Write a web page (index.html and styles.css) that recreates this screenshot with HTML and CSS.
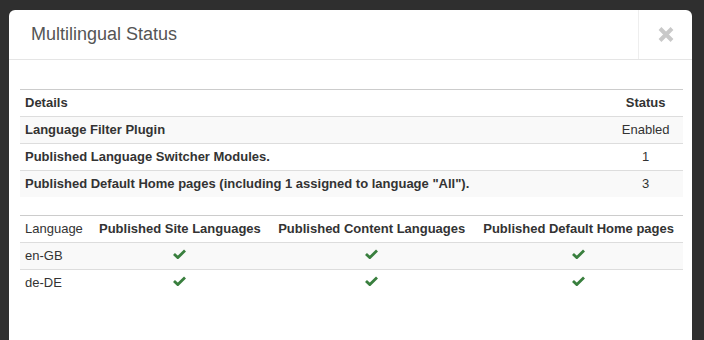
FILE: index.html
```html
<!DOCTYPE html>
<html lang="en">
<head>
  <meta charset="UTF-8" />
  <title>Multilingual Status</title>
  <link rel="stylesheet" href="styles.css">
</head>
<body>
  <div class="modal">
    <div class="modal-header">
      <h3>Multilingual Status</h3>
      <button class="close" aria-label="Close">
        <svg width="16" height="15" viewBox="0 0 16 15">
          <path d="M2 1.5 L14 13.5 M14 1.5 L2 13.5" stroke="#c9c9c9" stroke-width="4" />
        </svg>
      </button>
    </div>

    <div class="modal-body">
      <!-- Resumen -->
      <table class="table striped">
        <thead>
          <tr>
            <th>Details</th>
            <th class="center">Status</th>
          </tr>
        </thead>
        <tbody>
          <tr>
            <th>Language Filter Plugin</th>
            <td class="center">Enabled</td>
          </tr>
          <tr>
            <th>Published Language Switcher Modules.</th>
            <td class="center">1</td>
          </tr>
          <tr>
            <th>Published Default Home pages (including 1 assigned to language "All").</th>
            <td class="center">3</td>
          </tr>
        </tbody>
      </table>

      <!-- Idiomas -->
      <table class="table striped langs">
        <thead>
          <tr>
            <th class="plain">Language</th>
            <th class="center">Published Site Languages</th>
            <th class="center">Published Content Languages</th>
            <th class="center">Published Default Home pages</th>
          </tr>
        </thead>
        <tbody>
          <tr>
            <td>en-GB</td>
            <td class="center"><span class="check"></span></td>
            <td class="center"><span class="check"></span></td>
            <td class="center"><span class="check"></span></td>
          </tr>
          <tr>
            <td>de-DE</td>
            <td class="center"><span class="check"></span></td>
            <td class="center"><span class="check"></span></td>
            <td class="center"><span class="check"></span></td>
          </tr>
        </tbody>
      </table>
    </div>
  </div>
</body>
</html>
```

FILE: styles.css
```css
body {
  margin: 0;
  background: #2f2f2f;
  font-family: 'Liberation Sans', Arial, sans-serif;
  font-size: 13px;
  color: #333;
  overflow: hidden;
}

.modal {
  margin: 10px 12px 0 9px;
  background: #fff;
  border-radius: 6px 6px 0 0;
  height: 340px;
}

.modal-header {
  display: flex;
  align-items: stretch;
  height: 49px;
  border-bottom: 1px solid #e5e5e5;
}

.modal-header h3 {
  flex: 1;
  margin: 0;
  padding-left: 22px;
  align-self: center;
  font-size: 18px;
  font-weight: normal;
  color: #555;
}

.close {
  width: 54px;
  border: none;
  border-left: 1px solid #eee;
  background: transparent;
  padding: 0;
  display: flex;
  align-items: center;
  justify-content: center;
  cursor: pointer;
}

.modal-body {
  padding: 29px 9px 0 11px;
}

.table {
  width: 100%;
  border-collapse: collapse;
  margin-bottom: 18px;
}

.table th,
.table td {
  height: 26px;
  padding: 0 5px;
  text-align: left;
  vertical-align: middle;
  border-top: 1px solid #ddd;
  line-height: 18px;
}

.table th {
  font-weight: bold;
}

.table thead th {
  border-top: 1px solid #ccc;
}

.table th.plain {
  font-weight: normal;
}

.table .center {
  text-align: center;
}

.striped tbody tr:nth-child(odd) th,
.striped tbody tr:nth-child(odd) td {
  background: #f9f9f9;
}

.langs th,
.langs td {
  white-space: nowrap;
}

.check {
  display: inline-block;
  width: 13px;
  height: 10px;
  position: relative;
  top: -1px;
  background: no-repeat center / 13px 10px;
  background-image: url("data:image/svg+xml;utf8,<svg xmlns='http://www.w3.org/2000/svg' viewBox='0 0 13 10'><path d='M1 5 L4.8 8.6 L12 1.6' fill='none' stroke='%23397f3e' stroke-width='2.8' stroke-linejoin='miter'/></svg>");
}
```
